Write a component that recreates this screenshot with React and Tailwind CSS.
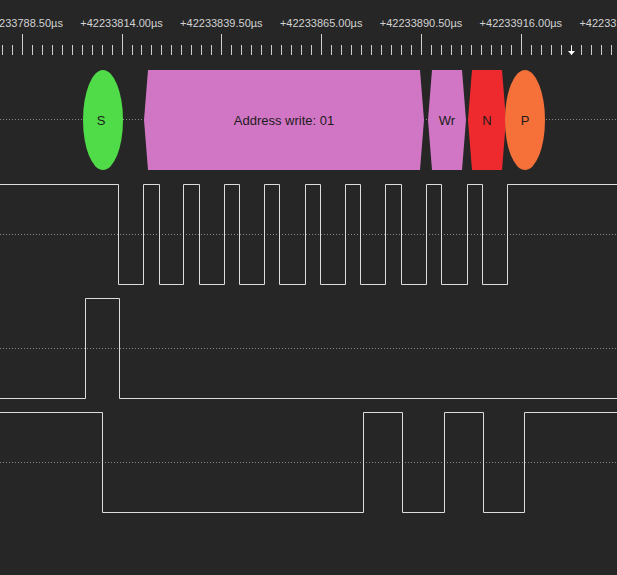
import React from 'react';

const W = 617;
const ROW_H = 114;

const FONT = { fontFamily: '"Liberation Sans", Arial, sans-serif' };

// ruler labels, one per major tick
const labels = [
  '+42233788.50µs',
  '+42233814.00µs',
  '+42233839.50µs',
  '+42233865.00µs',
  '+42233890.50µs',
  '+42233916.00µs',
  '+42233941.50µs',
];

const MAJOR0 = 21.7;
const MAJOR_STEP = 99.83;

// channel traces: starting level plus edge x-positions
const traces = [
  {
    start: 1,
    edges: [118.5, 143.5, 159.5, 183.5, 199.5, 224.5, 239.5, 264.5, 279.5, 305.5, 320.5, 345.5, 360.5, 385.5, 401.5, 426.5, 441.5, 467.5, 482.5, 507.5],
  },
  { start: 0, edges: [85.5, 119.5] },
  { start: 1, edges: [102.5, 363.5, 402.5, 444.5, 483.5, 524.5] },
];

const HI = 7.5;
const LO = 107.5;

function tracePath({ start, edges }) {
  let level = start;
  let d = `M0 ${level ? HI : LO}`;
  for (const x of edges) {
    level = 1 - level;
    d += ` H${x} V${level ? HI : LO}`;
  }
  d += ` H${W}`;
  return d;
}

function hexagon(start, end, top, bottom, cap) {
  const mid = (top + bottom) / 2;
  return [
    [start, mid],
    [start + cap, top],
    [end - cap, top],
    [end, mid],
    [end - cap, bottom],
    [start + cap, bottom],
  ]
    .map((p) => p.join(','))
    .join(' ');
}

function Ruler() {
  const ticks = [];
  for (let i = -3; i < 65; i++) {
    const x = MAJOR0 + (i * MAJOR_STEP) / 10;
    if (x < 0 || x > W) continue;
    const major = i % 10 === 0;
    const px = Math.round(x) + 0.5;
    ticks.push(
      <line key={i} x1={px} x2={px} y1={major ? 34 : 45} y2={55} stroke="#cfcfcf" strokeWidth="1" />
    );
  }
  return (
    <div className="h-[62px] shrink-0">
      <svg width={W} height="62" style={FONT}>
        {labels.map((t, i) => (
          <text key={t} x={MAJOR0 + i * MAJOR_STEP} y="27" textAnchor="middle" fontSize="11" fill="#d2d2d2">
            {t}
          </text>
        ))}
        {ticks}
        {/* trigger marker */}
        <line x1="571.5" x2="571.5" y1="46" y2="51" stroke="#ffffff" strokeWidth="1" />
        <polygon points="568,51 575,51 571.5,55" fill="#ffffff" />
      </svg>
    </div>
  );
}

function Midline() {
  return <line x1="0" x2={W} y1="57.5" y2="57.5" stroke="#8a8a8a" strokeWidth="1" strokeDasharray="1 2" />;
}

function DecoderRow() {
  return (
    <div className="h-[115px] shrink-0">
      <svg width={W} height="115" style={FONT}>
        <Midline />
        <ellipse cx="103" cy="58" rx="20" ry="50" fill="#50dc48" />
        <polygon points={hexagon(144, 424, 8, 108, 4)} fill="#d176c4" />
        <polygon points={hexagon(428, 466, 8, 108, 4)} fill="#d176c4" />
        <polygon points={hexagon(468, 506, 8, 108, 4)} fill="#ef2a2e" />
        <ellipse cx="525" cy="58" rx="20" ry="50" fill="#f6703a" />
        <g fontSize="13" fill="#1c1c1c" textAnchor="middle">
          <text x="101" y="63">S</text>
          <text x="284" y="63">Address write: 01</text>
          <text x="447" y="63">Wr</text>
          <text x="487" y="63">N</text>
          <text x="525" y="63">P</text>
        </g>
      </svg>
    </div>
  );
}

function TraceRow({ trace }) {
  return (
    <div className="h-[114px] shrink-0">
      <svg width={W} height={ROW_H}>
        <Midline />
        <path d={tracePath(trace)} fill="none" stroke="#dcdcdc" strokeWidth="1" />
      </svg>
    </div>
  );
}

export default function App() {
  return (
    <div className="w-[617px] h-[575px] overflow-hidden bg-[#262626] flex flex-col">
      <Ruler />
      <DecoderRow />
      {traces.map((t, i) => (
        <TraceRow key={i} trace={t} />
      ))}
    </div>
  );
}
